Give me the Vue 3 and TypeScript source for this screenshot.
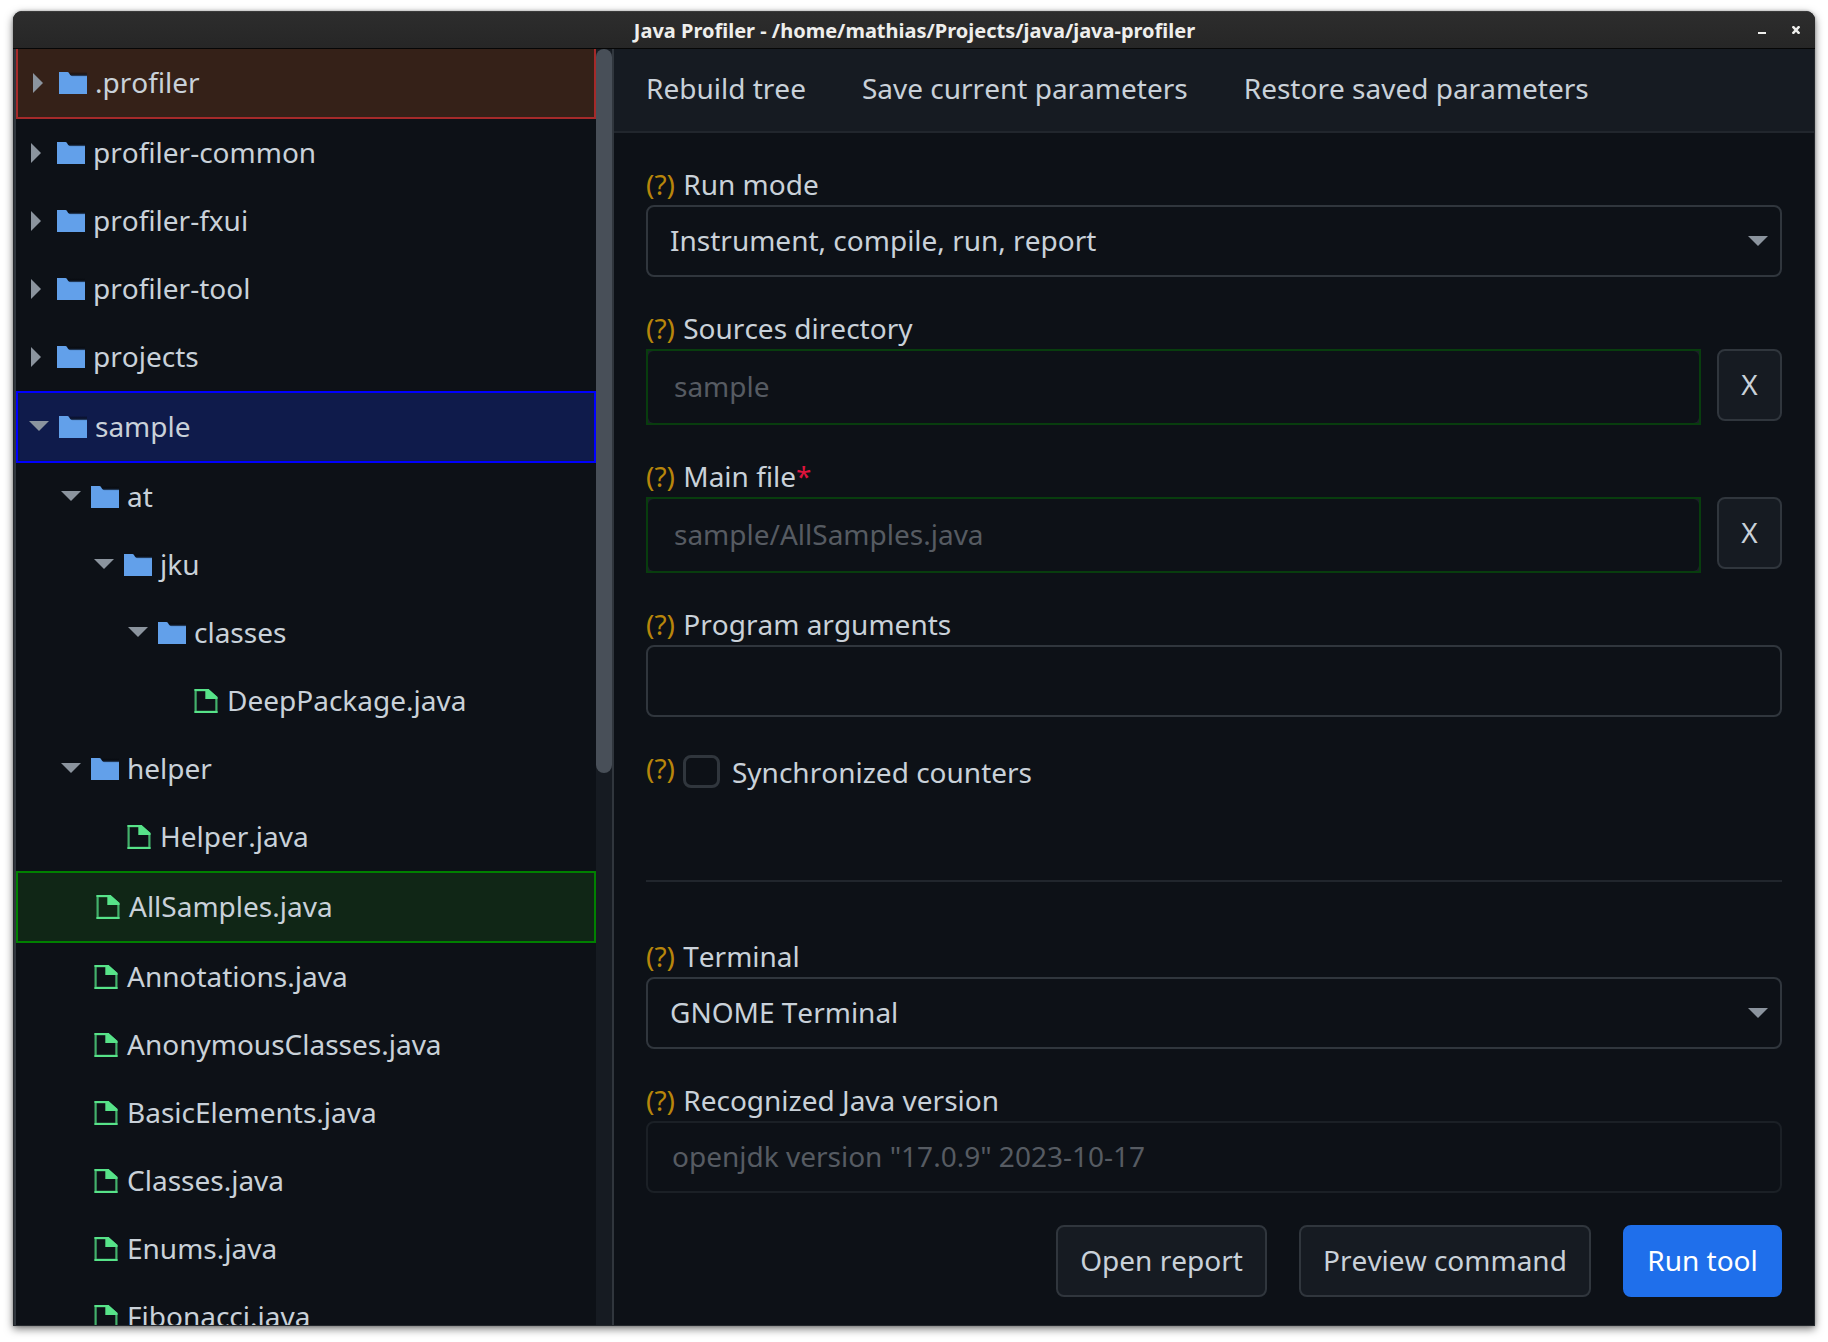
<script setup lang="ts">
import { ref } from 'vue'

type Kind = 'folder' | 'file'
type Mark = 'excluded' | 'source' | 'main'

interface TreeRow {
  name: string
  depth: number
  kind: Kind
  open?: boolean
  mark?: Mark
}

const rows = ref<TreeRow[]>([
  { name: '.profiler', depth: 0, kind: 'folder', mark: 'excluded' },
  { name: 'profiler-common', depth: 0, kind: 'folder' },
  { name: 'profiler-fxui', depth: 0, kind: 'folder' },
  { name: 'profiler-tool', depth: 0, kind: 'folder' },
  { name: 'projects', depth: 0, kind: 'folder' },
  { name: 'sample', depth: 0, kind: 'folder', open: true, mark: 'source' },
  { name: 'at', depth: 1, kind: 'folder', open: true },
  { name: 'jku', depth: 2, kind: 'folder', open: true },
  { name: 'classes', depth: 3, kind: 'folder', open: true },
  { name: 'DeepPackage.java', depth: 4, kind: 'file' },
  { name: 'helper', depth: 1, kind: 'folder', open: true },
  { name: 'Helper.java', depth: 2, kind: 'file' },
  { name: 'AllSamples.java', depth: 1, kind: 'file', mark: 'main' },
  { name: 'Annotations.java', depth: 1, kind: 'file' },
  { name: 'AnonymousClasses.java', depth: 1, kind: 'file' },
  { name: 'BasicElements.java', depth: 1, kind: 'file' },
  { name: 'Classes.java', depth: 1, kind: 'file' },
  { name: 'Enums.java', depth: 1, kind: 'file' },
  { name: 'Fibonacci.java', depth: 1, kind: 'file' },
])

const menu: string[] = ['Rebuild tree', 'Save current parameters', 'Restore saved parameters']
const indent = (depth: number): string => `${Math.round(depth * 33.5)}px`
</script>

<template>
  <div class="desktop">
    <div class="window">
      <header class="titlebar">
        <span class="title">Java Profiler - /home/mathias/Projects/java/java-profiler</span>
        <div class="controls">
          <svg width="8" height="8" viewBox="0 0 8 8"><path d="M0 6h8v2H0z" fill="#eeeeec" /></svg>
          <svg width="8" height="8" viewBox="0 0 8 8"><path d="M0.6 0.3L7.4 7.7M7.4 0.3L0.6 7.7" stroke="#eeeeec" stroke-width="2.5" /></svg>
        </div>
      </header>

      <div class="content">
        <aside class="sidebar">
          <div class="tree">
            <div v-for="row in rows" :key="row.name" class="row" :class="row.mark">
              <span class="indent" :style="{ width: indent(row.depth) }"></span>
              <span class="disclosure">
                <svg v-if="row.kind === 'folder' && row.open" class="down" width="20" height="10" viewBox="0 0 20 10"><path d="M0 0h20L10 10z" fill="#8b949e" /></svg>
                <svg v-else-if="row.kind === 'folder'" class="right" width="10" height="20" viewBox="0 0 10 20"><path d="M0 0v20L10 10z" fill="#8b949e" /></svg>
              </span>
              <svg v-if="row.kind === 'folder'" class="folder" width="28" height="22" viewBox="0 0 28 22">
                <defs>
                  <linearGradient id="flap" x1="0" y1="0" x2="0" y2="1">
                    <stop offset="0" stop-color="#04070c" stop-opacity="0.05" />
                    <stop offset="0.4" stop-color="#04070c" stop-opacity="0.5" />
                    <stop offset="0.65" stop-color="#1b2e48" stop-opacity="0.8" />
                    <stop offset="1" stop-color="#62a0ea" />
                  </linearGradient>
                </defs>
                <path d="M8 0H28V5H10z" fill="url(#flap)" />
                <path d="M0 0H8.5C10.8 0.2 10.6 4.2 13.5 4.2H28V22H0z" fill="#62a0ea" />
              </svg>
              <svg v-else class="file" width="24" height="24" viewBox="-0.5 0 24 24">
                <path d="M1.1 1.1H13.5L21.9 8.5V22.9H1.1z" fill="none" stroke="#43b06b" stroke-width="2.2" />
                <path d="M0 1H14M0 23H23" stroke="#57e389" stroke-width="2" />
                <path d="M10.8 0H14L23 8V10H10.8z" fill="#57e389" />
              </svg>
              <span class="name">{{ row.name }}</span>
            </div>
          </div>
          <div class="scrollbar"><div class="thumb"></div></div>
        </aside>

        <main class="main">
          <nav class="toolbar">
            <span v-for="item in menu" :key="item">{{ item }}</span>
          </nav>

          <div class="form">
            <div class="field">
              <label><i>(?)</i> Run mode</label>
              <div class="box select">
                <span>Instrument, compile, run, report</span>
                <svg width="20" height="10" viewBox="0 0 20 10"><path d="M0 0h20L10 10z" fill="#8b949e" /></svg>
              </div>
            </div>

            <div class="field">
              <label><i>(?)</i> Sources directory</label>
              <div class="pair">
                <div class="picked"><div class="inner">sample</div></div>
                <button class="button clear">X</button>
              </div>
            </div>

            <div class="field">
              <label><i>(?)</i> Main file<b>*</b></label>
              <div class="pair">
                <div class="picked"><div class="inner">sample/AllSamples.java</div></div>
                <button class="button clear">X</button>
              </div>
            </div>

            <div class="field">
              <label><i>(?)</i> Program arguments</label>
              <div class="box"></div>
            </div>

            <div class="check">
              <i>(?)</i>
              <span class="checkbox"></span>
              <span class="caption">Synchronized counters</span>
            </div>

            <hr />

            <div class="field">
              <label><i>(?)</i> Terminal</label>
              <div class="box select">
                <span>GNOME Terminal</span>
                <svg width="20" height="10" viewBox="0 0 20 10"><path d="M0 0h20L10 10z" fill="#8b949e" /></svg>
              </div>
            </div>

            <div class="field">
              <label><i>(?)</i> Recognized Java version</label>
              <div class="box disabled">openjdk version "17.0.9" 2023-10-17</div>
            </div>

            <div class="actions">
              <button class="button open">Open report</button>
              <button class="button preview">Preview command</button>
              <button class="button primary">Run tool</button>
            </div>
          </div>
        </main>
      </div>
    </div>
  </div>
</template>

<style>
body {
  margin: 0;
  background: #fff;
}
</style>

<style scoped>
* {
  box-sizing: border-box;
}
.desktop {
  width: 1828px;
  height: 1342px;
  padding: 11px 13px 16px;
  overflow: hidden;
  background: #fff;
  font: 28px/38px 'Noto Sans', sans-serif;
  font-kerning: none;
  color: #c9d1d9;
}
.window {
  display: flex;
  flex-direction: column;
  height: 1315px;
  border-radius: 9px 9px 0 0;
  background: #0d1117;
  overflow: hidden;
  box-shadow: 0 3px 8px rgba(0, 0, 0, 0.52), 0 0 3px rgba(0, 0, 0, 0.25);
}
.titlebar {
  display: grid;
  grid-template-columns: 1fr auto 1fr;
  flex: none;
  height: 38px;
  border-top: 1px solid #3b3b3b;
  border-bottom: 1px solid #060606;
  background: linear-gradient(#2d2d2d, #262626);
}
.title {
  grid-column: 2;
  padding: 5px 0 0 1px;
  font-size: 20px;
  line-height: 27px;
  font-weight: 700;
  font-kerning: normal;
  color: #eeeeec;
  white-space: nowrap;
}
.controls {
  display: flex;
  justify-content: flex-end;
  gap: 26px;
  padding: 14px 15px 0 0;
}
svg {
  display: block;
  flex: none;
}
.content {
  display: flex;
  flex: 1;
  min-height: 0;
  border: solid #24282d;
  border-width: 0 1px 1px;
}
.sidebar {
  display: flex;
  flex: none;
  width: 600px;
  border: solid #30363d;
  border-width: 0 2px;
  overflow: hidden;
}
.tree {
  flex: none;
  width: 580px;
  margin-top: -2px;
}
.row {
  display: flex;
  align-items: center;
  height: 68px;
  padding-left: 11px;
  border: 0 solid transparent;
  white-space: nowrap;
}
.row.excluded,
.row.source,
.row.main {
  height: 72px;
  border-width: 2px;
}
.row.excluded {
  border-color: #a52a2a;
  background: #352118;
}
.row.source {
  border-color: #0000ff;
  background: #0f1b4b;
}
.row.main {
  border-color: #008000;
  background: #102616;
}
.disclosure {
  display: flex;
  justify-content: center;
  width: 20px;
  margin-right: 10px;
}
.down {
  margin-bottom: 2px;
}
.right {
  margin-right: 2px;
}
.folder {
  margin-right: 8px;
}
.file {
  margin: 0 9px 0 3px;
}
.name {
  padding-bottom: 2px;
}
.scrollbar {
  flex: 1;
  background: #161b22;
}
.thumb {
  height: 724px;
  border-radius: 8px;
  background: #484f58;
}
.main {
  flex: 1;
  min-width: 0;
}
.toolbar {
  display: flex;
  gap: 56px;
  height: 84px;
  padding: 20px 32px 0;
  border-bottom: 2px solid #21262d;
  background: #161b22;
  white-space: nowrap;
}
.form {
  display: flex;
  flex-direction: column;
  gap: 32px;
  padding: 32px 32px 0;
}
label {
  display: block;
  height: 40px;
  white-space: nowrap;
}
label i {
  margin-right: 1px;
}
i {
  font-style: normal;
  color: #b8860b;
}
b {
  font-weight: 400;
  color: #dc143c;
}
.box {
  display: flex;
  align-items: center;
  height: 72px;
  padding: 0 12px 2px 24px;
  border: 2px solid #30363d;
  border-radius: 8px;
}
.select {
  justify-content: space-between;
  padding-left: 22px;
}
.select svg {
  margin-top: 2px;
}
.disabled {
  border-color: #1b2026;
  color: #565b62;
}
.pair {
  display: flex;
  gap: 16px;
}
.picked {
  flex: 1;
  height: 76px;
  border: 2px solid #083d0e;
  background: #1b2026;
}
.inner {
  display: flex;
  align-items: center;
  height: 72px;
  padding: 0 26px 2px;
  border-radius: 6px;
  background: #0d1117;
  color: #565b62;
}
.button {
  height: 72px;
  padding: 0 0 2px;
  border: 2px solid #30363d;
  border-radius: 8px;
  background: #161b22;
  color: #c9d1d9;
  font: inherit;
  font-kerning: none;
  white-space: nowrap;
}
.clear {
  width: 65px;
}
.check {
  display: flex;
  height: 99px;
}
.checkbox {
  width: 37px;
  height: 33px;
  margin: 6px 12px 0 8px;
  border: 3px solid #30363d;
  border-radius: 8px;
}
.caption {
  padding-top: 4px;
}
hr {
  width: 100%;
  height: 2px;
  margin: 0 0 23px;
  border: 0;
  background: #21262d;
}
.actions {
  display: flex;
  justify-content: flex-end;
  gap: 32px;
}
.open {
  width: 211px;
}
.preview {
  width: 292px;
}
.primary {
  width: 159px;
  border-color: #1f6feb;
  background: #1f6feb;
  color: #fff;
}
</style>
